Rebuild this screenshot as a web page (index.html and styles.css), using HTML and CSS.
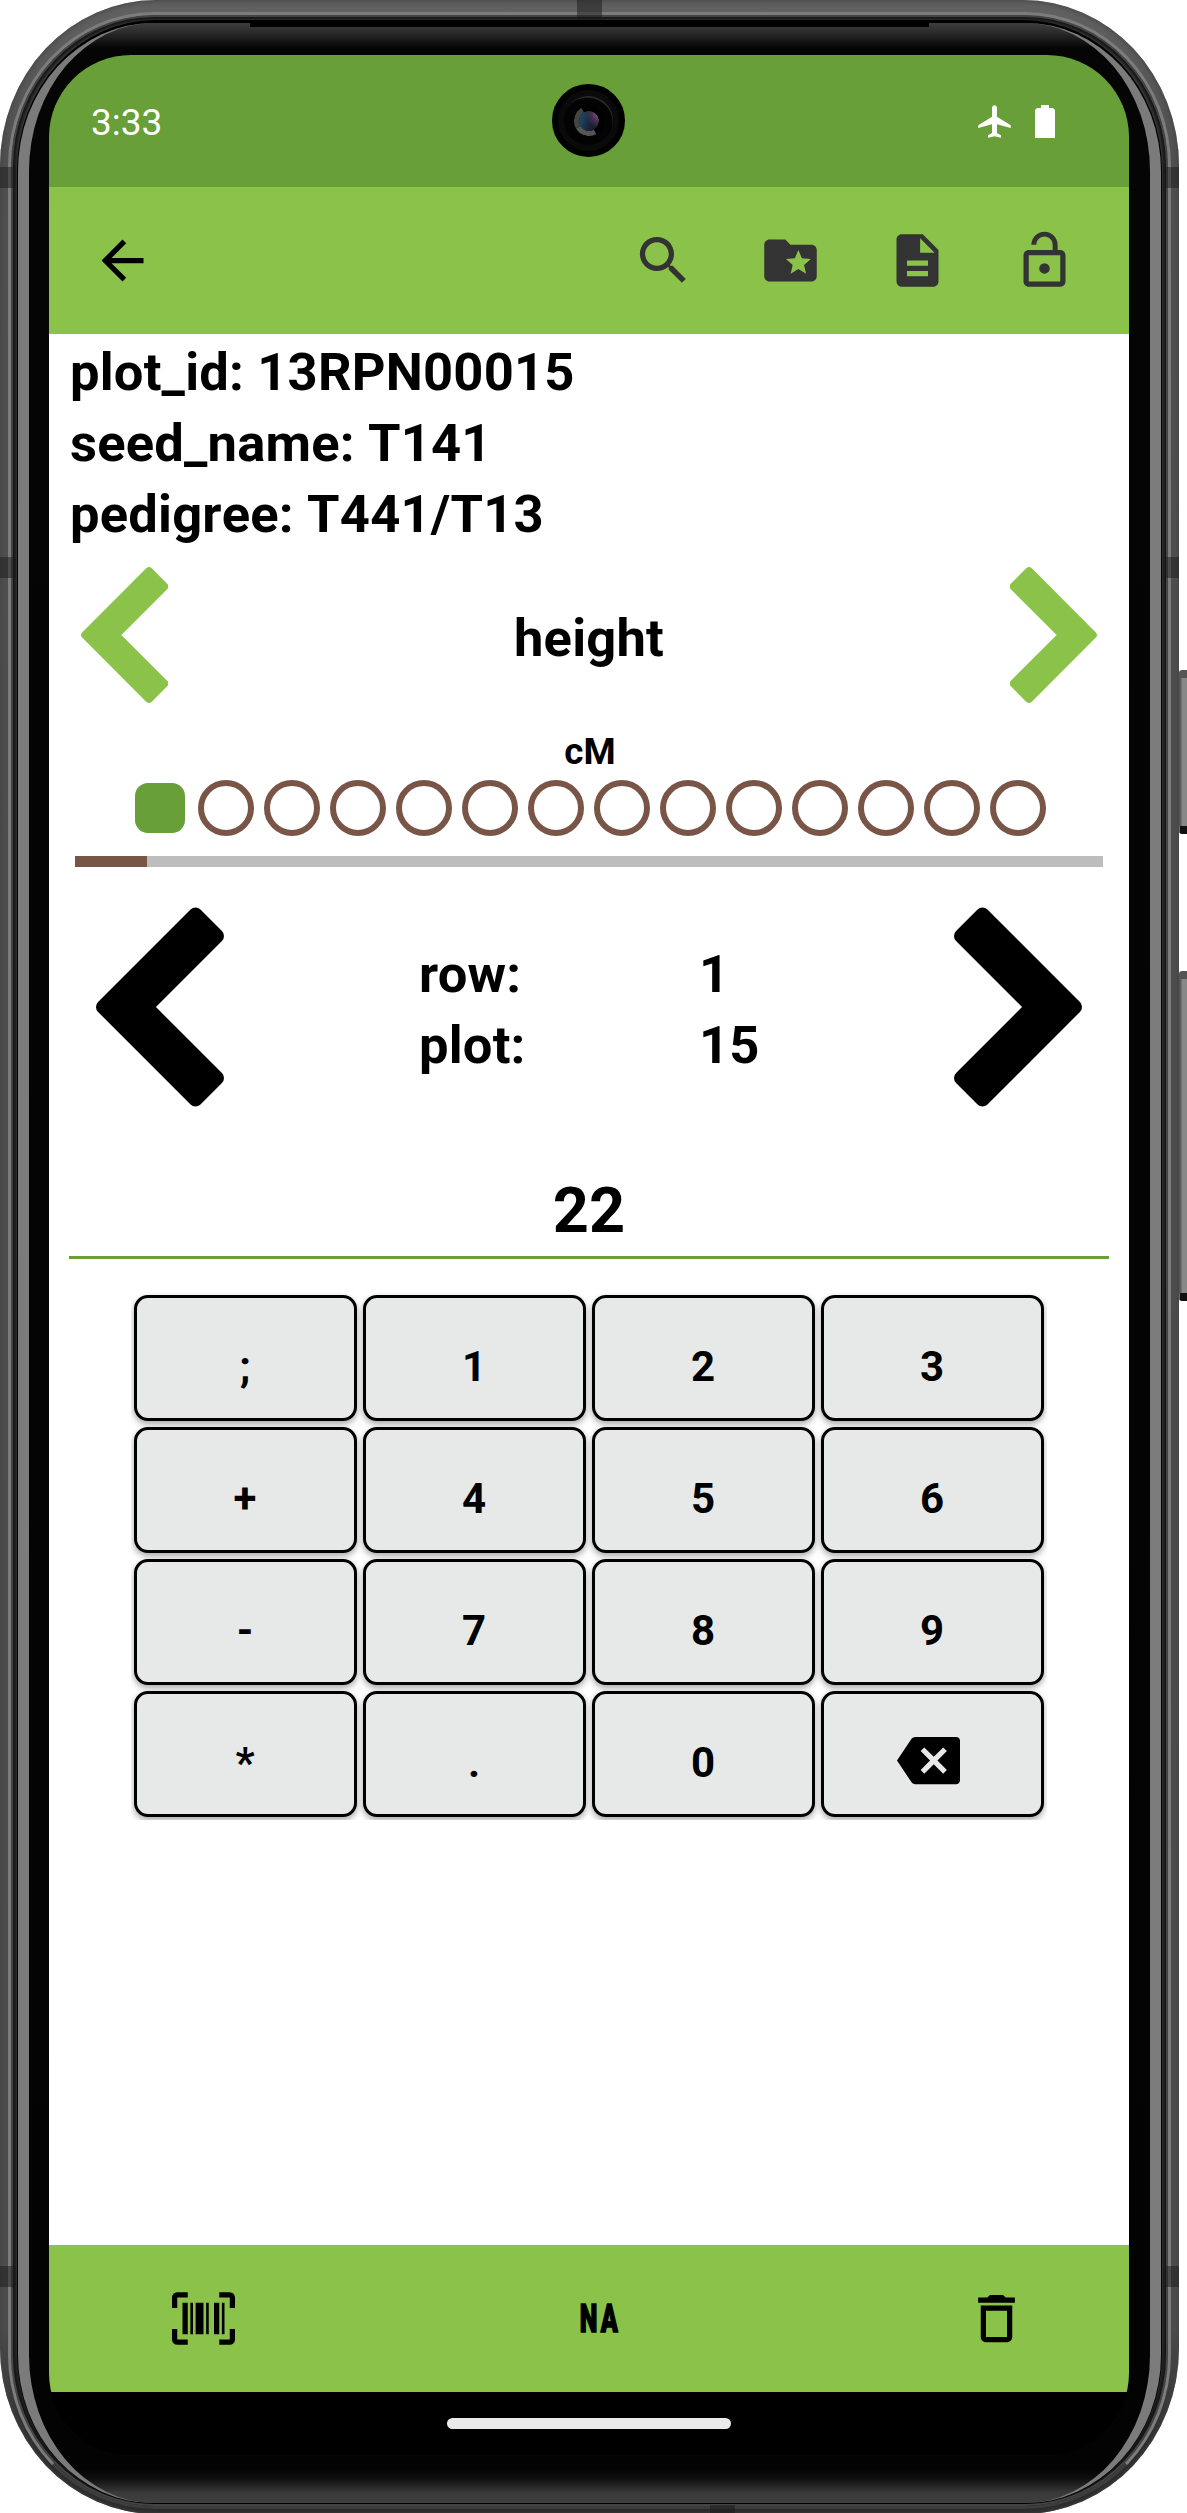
FILE: index.html
```html
<!DOCTYPE html>
<html lang="en">
<head>
<meta charset="utf-8">
<title>Field Book – Collect</title>
<link rel="stylesheet" href="styles.css">
</head>
<body>
<div class="phone">
  <i class="button power"></i><i class="button volume"></i>
  <i class="band side b1"></i><i class="band side b2"></i><i class="band side b3"></i>
  <i class="band right b1"></i><i class="band right b2"></i><i class="band right b3"></i>
  <i class="band top"></i><i class="band bottom"></i>
  <div class="rail">
    <div class="bezel"><i class="speaker"></i>
      <div class="screen">
        <header class="status">
          <span class="clock">3:33</span>
          <i class="camera"><i class="lens"></i></i>
          <span class="indicators">
            <svg class="plane" viewBox="0 0 24 24"><path d="M22 15.600v-1.300l-8.500-5.300V3.500c0-.83-.67-1.500-1.500-1.500s-1.500.67-1.500 1.500V9L2 14.300V16l8.500-2.300V19L8 20.500V22l4-1 4 1v-1.500L13.500 19v-5.300L22 16z"/></svg>
            <svg class="battery" viewBox="0 0 20 33"><path d="M6 0h8v3h4l2 2v28H0V5l2-2h4z"/></svg>
          </span>
        </header>
        <nav class="toolbar">
          <svg class="icon back" viewBox="0 0 24 24"><path d="M20 11H7.830l5.590-5.590L12 4l-8 8 8 8 1.410-1.410L7.830 13H20z"/></svg>
          <div class="actions">
            <svg class="icon" viewBox="0 0 24 24"><path d="M15.500 14h-.79l-.28-.27A6.471 6.471 0 0 0 16 9.500 6.500 6.500 0 1 0 9.500 16c1.610 0 3.090-.59 4.230-1.570l.27.28v.79l5 4.990L20.490 19zm-6 0C7.010 14 5 11.990 5 9.500S7.010 5 9.500 5 14 7.010 14 9.500 11.990 14 9.500 14z"/></svg>
            <svg class="icon" viewBox="0 0 24 24"><path d="M20 6h-8l-2-2H4c-1.100 0-2 .9-2 2v12c0 1.100.9 2 2 2h16c1.100 0 2-.9 2-2V8c0-1.100-.9-2-2-2zm-2.060 11L15 15.280 12.060 17l.78-3.330-2.590-2.240 3.410-.29L15 8l1.340 3.140 3.410.29-2.590 2.240z"/></svg>
            <svg class="icon" viewBox="0 0 24 24"><path d="M14 2H6c-1.100 0-2 .9-2 2v16c0 1.100.9 2 2 2h12c1.100 0 2-.9 2-2V8zm2 16H8v-2h8zm0-4H8v-2h8zm-3-5V3.500L18.500 9z"/></svg>
            <svg class="icon" viewBox="0 0 24 24"><path d="M12 17a2 2 0 1 0 0-4 2 2 0 0 0 0 4zm6-9h-1V6c0-2.760-2.240-5-5-5S7 3.240 7 6h1.900c0-1.710 1.390-3.100 3.100-3.100s3.100 1.390 3.100 3.100v2H6c-1.100 0-2 .9-2 2v10c0 1.100.9 2 2 2h12c1.100 0 2-.9 2-2V10c0-1.100-.9-2-2-2zm0 12H6V10h12z"/></svg>
          </div>
        </nav>
        <main class="content">
          <section class="info">
            <p>plot_id: 13RPN00015</p>
            <p>seed_name: T141</p>
            <p>pedigree: T441/T13</p>
          </section>
          <section class="trait">
            <svg class="chev" viewBox="0 0 88 138"><path d="M5.200 69 69 5.200 84.300 20.500 35.800 69 84.300 117.500 69 132.800z"/></svg>
            <h1>height</h1>
            <svg class="chev flip" viewBox="0 0 88 138"><path d="M5.200 69 69 5.200 84.300 20.500 35.800 69 84.300 117.500 69 132.800z"/></svg>
          </section>
          <p class="unit">cM</p>
          <div class="dots">
            <span class="on"></span><span></span><span></span><span></span><span></span><span></span><span></span>
            <span></span><span></span><span></span><span></span><span></span><span></span><span></span>
          </div>
          <div class="progress"><div style="width:7%"></div></div>
          <section class="range">
            <svg class="big" viewBox="0 0 130 202"><path d="M8 101 100.500 8.500 122 30 51 101 122 172 100.500 193.500z"/></svg>
            <dl><dt>row:</dt><dd>1</dd><dt>plot:</dt><dd>15</dd></dl>
            <svg class="big flip" viewBox="0 0 130 202"><path d="M8 101 100.500 8.500 122 30 51 101 122 172 100.500 193.500z"/></svg>
          </section>
          <div class="value">22</div>
          <div class="keys">
            <button>;</button><button>1</button><button>2</button><button>3</button>
            <button>+</button><button>4</button><button>5</button><button>6</button>
            <button>-</button><button>7</button><button>8</button><button>9</button>
            <button>*</button><button>.</button><button>0</button>
            <button class="erase"><svg class="icon" viewBox="0 0 24 24"><path d="M22.500 3H7c-.69 0-1.230.35-1.590.88L0 12l5.410 8.110c.36.53.9.89 1.590.89h15.500c.9 0 1.500-.6 1.500-1.500v-15c0-.9-.6-1.500-1.500-1.500zM19 15.590 17.590 17 14 13.410 10.410 17 9 15.590 12.590 12 9 8.410 10.410 7 14 10.590 17.590 7 19 8.410 15.410 12z"/></svg></button>
          </div>
        </main>
        <footer class="bottombar">
          <svg class="icon" viewBox="0 0 24 24"><path d="M4 6h2v12H4zM7 6h1v12H7zM9 6h3v12H9zM13 6h1v12h-1zM16 6h2v12h-2zM19 6h1v12h-1zM2 4v4H0V4a2 2 0 0 1 2-2h4v2zM22 2a2 2 0 0 1 2 2v4h-2V4h-4V2zM2 16v4h4v2H2a2 2 0 0 1-2-2v-4zM22 20v-4h2v4a2 2 0 0 1-2 2h-4v-2z"/></svg>
          <span class="na">NA</span>
          <svg class="icon" viewBox="0 0 24 24"><path d="M6 19c0 1.100.9 2 2 2h8c1.100 0 2-.9 2-2V7H6zM8 9h8v10H8zm7.500-5-1-1h-5l-1 1H5v2h14V4z"/></svg>
        </footer>
        <div class="gesture"><i></i></div>
      </div>
    </div>
  </div>
</div>
</body>
</html>
```
FILE: styles.css
```css
* { box-sizing: border-box; }
body { margin: 0; background: #fff; font-family: Roboto, "Liberation Sans", sans-serif; color: #000; width: 1187px; height: 2513px; overflow: hidden; }
i { display: block; }
p, h1, dl, dd { margin: 0; }
svg { display: block; }

/* Phone body */
.phone {
  position: relative; width: 1179px; height: 2514px; padding: 20px 17px 10px;
  border-radius: 156px / 166px;
  background: linear-gradient(#626262, #505050 160px, #4c4c4c 2330px, #262626 2460px);
  box-shadow: inset 0 0 6px 1px #444;
}
.phone::before {
  content: ""; position: absolute; inset: 12px 8px 5px; border-radius: 146px / 154px;
  border: 3px solid #7c7c7c; border-bottom-color: #3d3d3d; box-shadow: inset 0 0 0 2px #444, inset 0 0 4px 6px #151515;
}
.rail { position: relative; height: 100%; border-radius: 138px / 150px; background: #000; padding: 3px 1px 1px; }
.bezel {
  position: relative; height: 100%; padding: 32px 31px 0; border-radius: 136px / 148px;
  background: linear-gradient(#3d3d3d 0, #2c2c2c 9px, #050505 25px, #030303 2446px, #101010 2456px, #3a3a3a 2470px, #3f3f3f 100%);
}
.bezel::before {
  content: ""; position: absolute; inset: 0; border-radius: inherit;
  border: 0 solid #7b7b7b; border-width: 0 11px;
}
.speaker { position: absolute; left: 232px; right: 232px; top: 0; height: 4px; background: #000; }
.band { position: absolute; background: rgba(25, 25, 25, .5); }
.side { left: 0; width: 16px; height: 21px; }
.right { right: 0; width: 16px; height: 21px; }
.b1 { top: 167px; }
.b2 { top: 557px; }
.b3 { top: 2266px; }
.band.top { left: 577px; top: 0; width: 25px; height: 20px; }
.band.bottom { left: 710px; bottom: 0; width: 25px; height: 9px; }
.button { position: absolute; left: 1179px; width: 8px; border-radius: 3px 0 0 3px; background: linear-gradient(90deg, #555, #8a8a8a 40%, #888); border: solid #555; border-width: 8px 0 8px 1px; border-bottom-color: #111; }
.power { top: 670px; height: 164px; }
.volume { top: 971px; height: 330px; }

/* Screen */
.screen { position: relative; width: 1080px; height: 2400px; border-radius: 82px; overflow: hidden; display: flex; flex-direction: column; background: #000; }
.status { position: relative; height: 132px; background: #689f38; display: flex; justify-content: space-between; align-items: center; padding: 0 74px 0 42px; color: #fff; }
.clock { font-size: 37px; line-height: 44px; padding-top: 4px; }
.indicators { display: flex; align-items: center; gap: 21px; fill: #fff; }
.plane { width: 39px; height: 39px; }
.battery { width: 20px; height: 33px; }
.camera { position: absolute; left: 503px; top: 29px; width: 73px; height: 73px; border-radius: 50%; background: #0a0a0a; border: 6px solid #000; display: grid; place-items: center; }
.camera::before { content: ""; position: absolute; inset: 6px; border-radius: 50%; background: #030303; border-top: 2px solid #282828; transform: rotate(25deg); }
.lens { position: relative; width: 30px; height: 30px; border-radius: 50%; border: 5px solid #000; border-left-color: #444; border-bottom-color: #555; transform: rotate(15deg); background: radial-gradient(circle at 80% 15%, #9a68a8 0, #47304f 25%, transparent 45%), linear-gradient(90deg, #225d79, #182339 55%, #160f1d); background-origin: border-box; background-clip: padding-box; }
.icon { width: 63px; height: 63px; }
.toolbar { height: 147px; background: #8bc34a; display: flex; align-items: center; justify-content: space-between; padding: 0 53px 0 42px; }
.actions { display: flex; gap: 64px; fill: #333; }
.content { flex: 1; display: flex; flex-direction: column; background: #fff; }
.info { padding: 3px 0 0 21px; font-size: 52.5px; font-weight: 700; line-height: 71px; letter-spacing: .2px; font-kerning: none; }
.trait { display: flex; justify-content: space-between; align-items: center; padding: 0 31px; margin-top: 16px; height: 138px; }
.trait h1 { font-size: 52.5px; line-height: 62px; font-weight: 700; padding-top: 5px; letter-spacing: .2px; }
.chev { width: 88px; height: 138px; fill: #8bc34a; stroke: #8bc34a; stroke-width: 8; stroke-linejoin: round; }
.big { width: 130px; height: 202px; fill: #000; stroke: #000; stroke-width: 14; stroke-linejoin: round; }
.flip { transform: scaleX(-1); }
.unit { font-size: 36.75px; line-height: 44px; font-weight: 700; text-align: center; margin-top: 26px; padding-left: 2px; }
.dots { display: flex; justify-content: center; margin-top: 1px; height: 66px; align-items: center; }
.dots span { width: 56px; height: 56px; border: 6px solid #795548; border-radius: 50%; margin: 0 5px; }
.dots .on { width: 50px; height: 50px; margin: 0 8px; background: #689f38; border: 0; border-radius: 13px; }
.progress { margin: 15px 26px 0; height: 11px; background: #bdbdbd; }
.progress div { height: 100%; background: #795548; }
.range { margin-top: 39px; height: 202px; padding: 0 46px; display: flex; align-items: center; justify-content: space-between; }
.range dl { width: 340px; display: grid; grid-template-columns: 280px auto; font-size: 52.5px; line-height: 71px; font-weight: 700; letter-spacing: .2px; padding-top: 5px; }
.value { margin: 60px 20px 0; padding-top: 5px; height: 91px; border-bottom: 3px solid #689f38; font-size: 63px; line-height: 76px; font-weight: 700; text-align: center; }
.keys { margin: 33px 82px 0; height: 528px; overflow: hidden; display: grid; grid-template-columns: repeat(4, 1fr); grid-auto-rows: 126px; gap: 6px; padding: 3px; }
.keys button { font: 700 42px/50px Roboto, "Liberation Sans", sans-serif; padding: 18px 1px 0 0; border: 3px solid #000; border-radius: 14px; background: #e7e9e8; color: #000; box-shadow: 0 3px 6px rgba(0, 0, 0, .35); display: flex; justify-content: center; align-items: center; }
.keys .erase { padding: 12px 8px 0 0; }
.bottombar { height: 147px; background: #8bc34a; display: flex; align-items: center; justify-content: space-between; padding: 0 101px 0 123px; }
.na { font-size: 38px; line-height: 44px; font-weight: 900; letter-spacing: 5px; width: 63px; display: flex; justify-content: center; transform: scaleX(.66); -webkit-text-stroke: 1.5px #000; }
.gesture { height: 63px; background: #000; display: flex; justify-content: center; padding-top: 26px; }
.gesture i { width: 284px; height: 11px; border-radius: 6px; background: #eaeaea; }
```
